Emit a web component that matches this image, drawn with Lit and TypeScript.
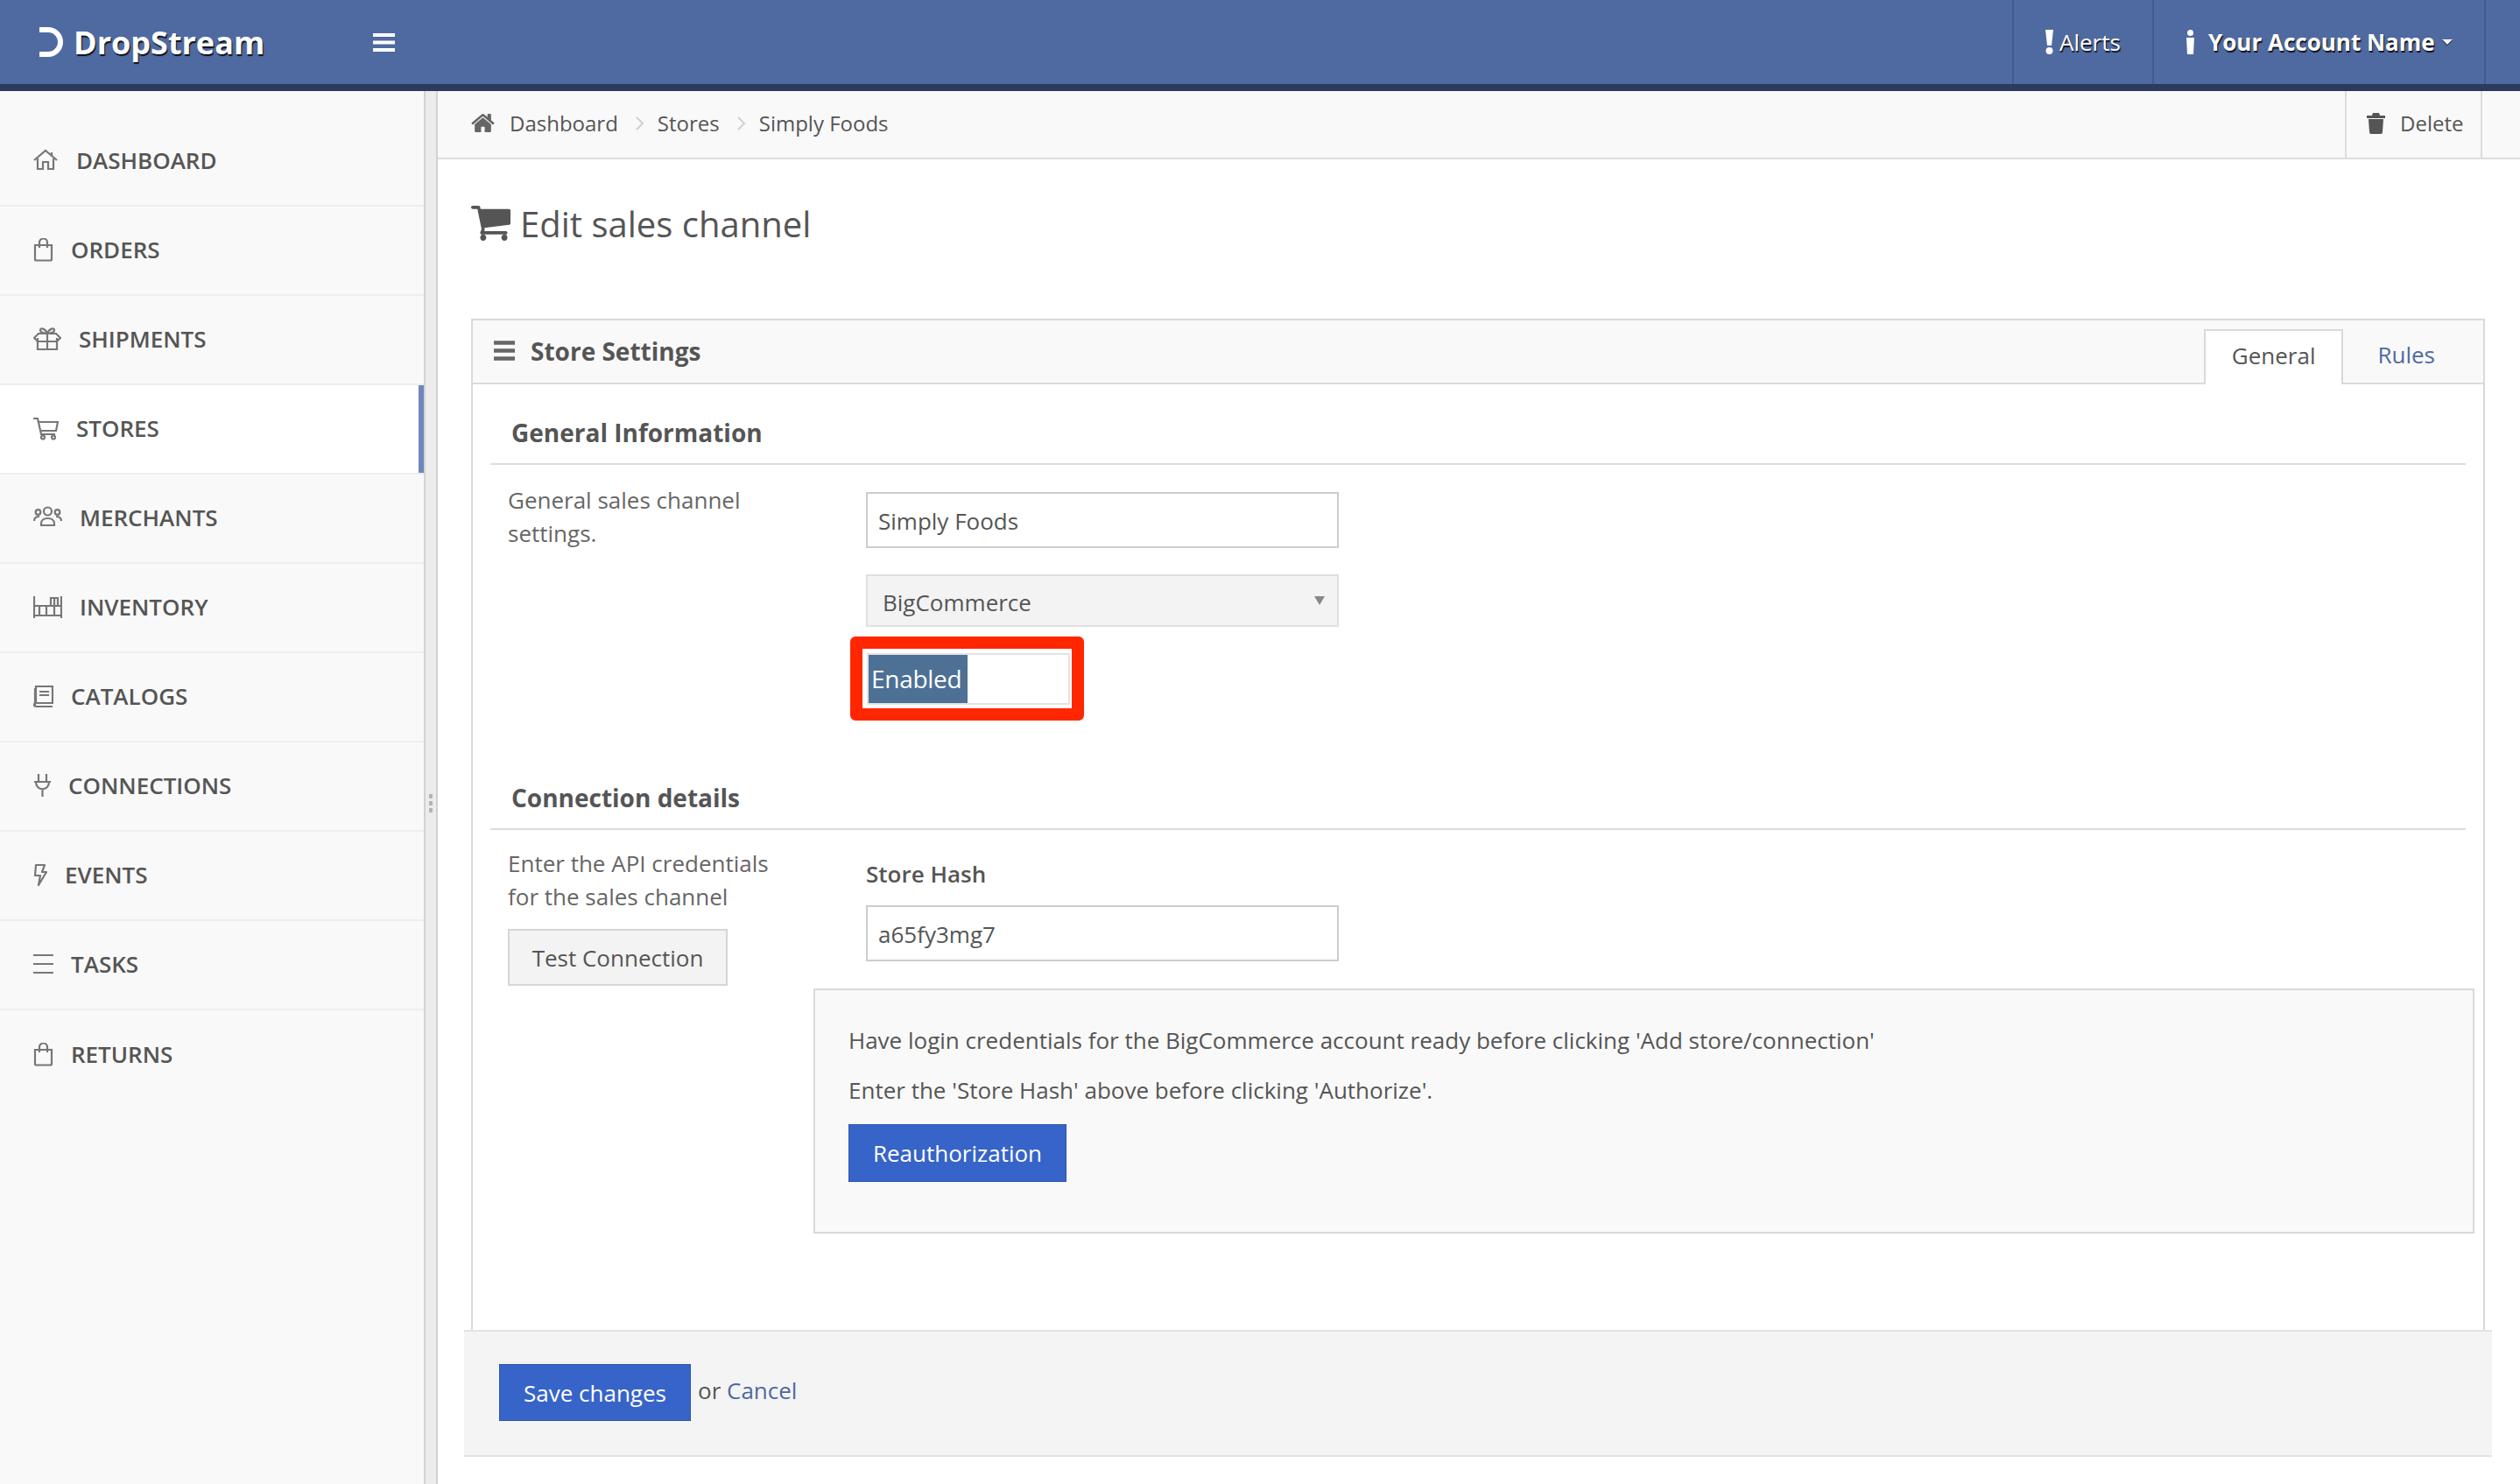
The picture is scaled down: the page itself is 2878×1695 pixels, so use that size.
import { LitElement, css, html, svg } from 'lit';
import { customElement } from 'lit/decorators.js';

const bag = svg`<path d="M2 8h19v16a1.500 1.500 0 0 1-1.500 1.500h-16a1.500 1.500 0 0 1-1.500-1.500z"/><path d="M7 11V5a4.500 4.500 0 0 1 9 0v6"/>`;

const navItems = [
  { label: 'Dashboard', w: 29, icon: svg`<path d="M1 13L14 2l13 11"/><path d="M5 11v12h6v-8h6v8h6V11"/><path d="M21 4v4"/>` },
  { label: 'Orders', w: 23, icon: bag },
  { label: 'Shipments', w: 32, icon: svg`<path d="M5 12v13h22V12"/><path d="M1 12l5-5h20l5 5-4 4H5z"/><path d="M16 7v18"/><path d="M16 7c-3 0-8-1-8-4s6-2 8 4c2-6 8-7 8-4s-5 4-8 4z"/>` },
  { label: 'Stores', w: 29, active: true, icon: svg`<path d="M0 2h5l4 18h16"/><path d="M6 6h22l-2 10H8"/><circle cx="11" cy="23.500" r="2"/><circle cx="23" cy="23.500" r="2"/>` },
  { label: 'Merchants', w: 33, icon: svg`<circle cx="16.500" cy="6" r="4.500"/><circle cx="5.500" cy="7" r="2.800"/><circle cx="27.500" cy="7" r="2.800"/><path d="M9 20c0-8 15-8 15 0v2H9z"/><path d="M1 17c0-4 3-5 6-5"/><path d="M32 17c0-4-3-5-6-5"/>` },
  { label: 'Inventory', w: 33, icon: svg`<path d="M1 1v25M32 1v25M1 23h31M1 12h31"/><path d="M7 12v11h17V12M15 12v11"/><path d="M20 12V3h8v9M24 3v9"/>` },
  { label: 'Catalogs', w: 23, icon: svg`<path d="M3 21V2h19v19H3a2 2 0 0 0 0 4h19"/><path d="M2 24V4"/><path d="M7 8h11M7 12h11"/>` },
  { label: 'Connections', w: 20, icon: svg`<path d="M6 0v8M15 0v8M1 9h19M3 9c0 11 15 11 15 0M10.500 17v9"/>` },
  { label: 'Events', w: 16, icon: svg`<path d="M3 2h10l-3 8h5L6 25l2-11H2z" stroke-linejoin="round"/>` },
  { label: 'Tasks', w: 23, icon: svg`<path d="M0 3h23M0 13h23M0 23h23"/>` },
  { label: 'Returns', w: 23, icon: bag },
];

const cartPath = 'M640 1536q0 52-38 90t-90 38-90-38-38-90 38-90 90-38 90 38 38 90zm896 0q0 52-38 90t-90 38-90-38-38-90 38-90 90-38 90 38 38 90zm128-1088v512q0 24-16.500 42.500t-40.500 21.500l-1044 122q13 60 13 70 0 16-24 64h920q26 0 45 19t19 45-19 45-45 19h-1024q-26 0-45-19t-19-45q0-11 8-31.500t16-36 21.500-40 15.500-29.500l-177-823h-204q-26 0-45-19t-19-45 19-45 45-19h256q16 0 28.500 6.500t19.500 15.500 13 24.500 8 26 5.500 29.500 4.500 26h1201q26 0 45 19t19 45z';
const homePath = 'M1408 992v480q0 26-19 45t-45 19h-384v-384h-256v384h-384q-26 0-45-19t-19-45v-480q0-1 .5-3t.5-3l575-474 575 474q1 2 1 6zm223-69l-62 74q-8 9-21 11h-3q-13 0-21-7l-692-577-692 577q-12 8-24 7-13-2-21-11l-62-74q-8-10-7-23.500t11-21.500l719-599q32-26 76-26t76 26l244 204v-195q0-14 9-23t23-9h192q14 0 23 9t9 23v408l219 182q10 8 11 21.500t-7 23.500z';

@customElement('app-root')
export class AppRoot extends LitElement {
  static styles = css`
    :host {
      display: block;
      min-height: 1695px;
      font-family: 'Open Sans', sans-serif;
      font-size: 26px;
      color: #555;
      background: #fff;
    }
    * { box-sizing: border-box; }
    a { color: #4f6aa0; text-decoration: none; }

    .topbar {
      display: flex;
      align-items: stretch;
      height: 104px;
      background: #4f6aa0;
      border-bottom: 8px solid #2c3a5c;
      color: #fff;
      text-shadow: 1px 2px 1px rgba(0, 0, 0, .85);
    }
    .brand {
      display: flex;
      align-items: center;
      width: 426px;
      padding-left: 44px;
      gap: 10px;
      font-size: 36px;
      font-weight: 700;
    }
    .brand svg { filter: blur(.6px); }
    .burger { align-self: center; width: 25px; height: 21px; }
    .topnav { display: flex; margin-left: auto; margin-right: 39px; border-right: 2px solid #435a8c; }
    .topnav .cell {
      display: flex;
      align-items: center;
      border-left: 2px solid #435a8c;
    }
    .alerts { width: 160px; padding-left: 36px; gap: 7px; }
    .account { width: 379px; padding-left: 36px; gap: 15px; font-weight: 700; }
    .caret { width: 12px; height: 6px; margin-left: -7px; filter: drop-shadow(0 1px 0 #000); }

    .layout { display: flex; min-height: 1591px; }
    .sidebar {
      width: 484px;
      flex: none;
      padding-top: 30px;
      background: #f9f9f9;
    }
    .nav-item {
      display: flex;
      align-items: center;
      gap: 20px;
      height: 102px;
      padding: 0 0 2px 38px;
      border-bottom: 2px solid #eeeeee;
      font-weight: 600;
      text-transform: uppercase;
    }
    .nav-item:last-child { border-bottom: none; }
    .nav-item.active { background: #fff; box-shadow: inset -6px 0 0 #6f87bd; }
    .nav-item svg { flex: none; height: 27px; fill: none; stroke: #777; stroke-width: 2.200; }

    .splitter {
      display: flex;
      flex-direction: column;
      align-items: center;
      gap: 3px;
      width: 16px;
      flex: none;
      padding-top: 803px;
      background: #ececec;
      border: solid #d2d2d2;
      border-width: 0 2px;
    }
    .splitter i { width: 4px; height: 5px; background: #b4b4b4; }

    .main { flex: 1; min-width: 0; }
    .crumbs {
      display: flex;
      align-items: center;
      height: 78px;
      padding: 0 0 3px 38px;
      font-size: 24px;
      background: #f9f9f9;
      border-bottom: 2px solid #dcdcdc;
    }
    .crumbs .home { width: 27px; height: 21px; fill: #666; margin-right: 17px; }
    .crumbs .sep { width: 10px; height: 16px; margin: 0 15px 0 20px; fill: none; stroke: #d0d0d0; stroke-width: 2; }
    .delete {
      display: flex;
      align-items: center;
      gap: 17px;
      align-self: stretch;
      width: 157px;
      margin: 0 43px -3px auto;
      padding: 0 0 3px 23px;
      border: solid #dcdcdc;
      border-width: 0 2px;
    }
    .delete svg { width: 21px; height: 24px; fill: #555; }

    .content { padding: 0 40px 31px 38px; }
    h1 {
      display: flex;
      align-items: center;
      gap: 11px;
      height: 50px;
      margin: 48px 0 84px;
      font-size: 40px;
      font-weight: 400;
    }
    h1 svg { width: 45px; height: 40px; fill: #555; }

    .panel { border: solid #d9d9d9; border-width: 2px 2px 0; }
    .panel-head {
      display: flex;
      height: 73px;
      background: #f9f9f9;
      border-bottom: 2px solid #d9d9d9;
    }
    .panel-title {
      display: flex;
      align-items: center;
      gap: 18px;
      padding: 0 0 2px 24px;
      font-weight: 700;
      font-size: 28px;
    }
    .panel-title svg { width: 24px; height: 23px; stroke: #666; stroke-width: 4.500; fill: none; }
    .tabs { display: flex; margin-left: auto; margin-bottom: -2px; padding-top: 10px; margin-right: 23px; }
    .tab { display: flex; align-items: center; height: 63px; padding: 0 32px 5px; }
    .tab.current {
      background: #fff;
      border: solid #d9d9d9;
      border-width: 2px 2px 0;
      padding: 0 30px 5px;
      margin-right: 7px;
    }

    .panel-body { padding: 0 20px 110px; }
    h2 {
      height: 92px;
      margin: 0;
      padding: 36px 0 0 24px;
      font-size: 28px;
      line-height: 38px;
      font-weight: 700;
      border-bottom: 2px solid #dcdcdc;
    }
    .row { display: grid; grid-template-columns: 429px 540px; }
    .row p { margin: 0; padding: 21px 20px 0; line-height: 38px; color: #666; width: 320px; box-sizing: content-box; }
    .stack { padding-top: 31px; }
    input {
      display: block;
      width: 540px;
      height: 64px;
      padding: 2px 12px 0;
      font: inherit;
      color: #555;
      border: 2px solid #cdcdcd;
      border-radius: 0;
      background: #fff;
    }
    .select {
      display: flex;
      align-items: center;
      justify-content: space-between;
      height: 60px;
      margin-top: 30px;
      padding: 3px 14px 0 17px;
      background: #f3f3f3;
      border: 2px solid #e0e0e0;
    }
    .select svg { width: 12px; height: 10px; fill: #888; margin-top: -3px; }
    .mark {
      width: 267px;
      height: 96px;
      margin: 11px 0 0 -18px;
      padding: 5px 3px 4px 5px;
      border: 14px solid #ff2600;
      border-radius: 6px;
    }
    .toggle { height: 59px; border: 2px solid #e3e3e3; width: 232px; }
    .toggle span {
      display: block;
      width: 113px;
      height: 100%;
      padding-left: 3px;
      line-height: 55px;
      font-size: 28px;
      letter-spacing: -.3px;
      color: #fff;
      background: #4d7095;
      white-space: nowrap;
    }
    .general { height: 325px; }
    .btn {
      display: inline-flex;
      align-items: center;
      justify-content: center;
      font: inherit;
      border-radius: 0;
    }
    .btn.light {
      width: 251px;
      height: 65px;
      margin: 18px 0 0 20px;
      background: #f3f3f3;
      border: 2px solid #d6d6d6;
      color: #555;
    }
    .btn.primary { background: #3764c8; border: 1px solid #2f56ad; color: #fff; }
    label { display: block; margin: 31px 0 17px; line-height: 38px; font-weight: 600; }
    .left p { padding-top: 19px; }
    .hash { height: 181px; }
    .info {
      height: 280px;
      margin: 0 0 0 369px;
      width: 1897px;
      padding: 39px 38px 0;
      background: #f9f9f9;
      border: 2px solid #d9d9d9;
    }
    .info p { margin: 0 0 21px; line-height: 36px; }
    .info .btn { width: 249px; height: 66px; }

    .footer {
      display: flex;
      align-items: center;
      gap: 8px;
      height: 145px;
      margin: 0 -8px;
      padding: 0 0 2px 40px;
      background: #f4f4f4;
      border: solid #e3e3e3;
      border-width: 2px 0;
    }
    .footer .btn { width: 219px; height: 65px; }
    .footer span { margin-top: -6px; }
  `;

  render() {
    return html`
      <header class="topbar">
        <div class="brand">
          <svg width="30" height="36" viewBox="0 0 30 36" fill="none" stroke="#fff" stroke-width="6"><path d="M1 4h10a14 14 0 0 1 0 28H1"/></svg>
          DropStream
        </div>
        <svg class="burger" viewBox="0 0 25 21" fill="#fff"><path d="M0 0h25v4H0zM0 8.500h25v4H0zM0 17h25v4H0z"/></svg>
        <div class="topnav">
          <div class="cell alerts">
            <svg width="9" height="28" viewBox="0 0 9 28" fill="#fff"><path d="M0 0h9L7 18H2z"/><circle cx="4.500" cy="24" r="4"/></svg>
            Alerts
          </div>
          <div class="cell account">
            <svg width="11" height="28" viewBox="0 0 11 28" fill="#fff"><circle cx="5.500" cy="3.500" r="3.500"/><path d="M1 9h9l-1 19H2z"/></svg>
            Your Account Name
            <svg class="caret" viewBox="0 0 12 6" fill="#fff"><path d="M0 0h12L6 6z"/></svg>
          </div>
        </div>
      </header>
      <div class="layout">
        <nav class="sidebar">
          ${navItems.map((item) => html`
            <div class="nav-item ${item.active ? 'active' : ''}">
              <svg viewBox="0 0 ${item.w} 27" style="width: ${item.w}px">${item.icon}</svg>
              ${item.label}
            </div>
          `)}
        </nav>
        <div class="splitter"><i></i><i></i><i></i></div>
        <main class="main">
          <div class="crumbs">
            <svg class="home" viewBox="0 256 1664 1280"><path d=${homePath}/></svg>
            Dashboard
            <svg class="sep" viewBox="0 0 10 16"><path d="M1 1l7 7-7 7"/></svg>
            Stores
            <svg class="sep" viewBox="0 0 10 16"><path d="M1 1l7 7-7 7"/></svg>
            Simply Foods
            <div class="delete">
              <svg viewBox="0 0 21 24"><path d="M7 0h7l1 3h6v3H0V3h6zM2 7h17l-1 15a2 2 0 0 1-2 2H5a2 2 0 0 1-2-2z"/></svg>
              Delete
            </div>
          </div>
          <div class="content">
            <h1>
              <svg viewBox="0 256 1664 1408" preserveAspectRatio="none"><path d=${cartPath}/></svg>
              Edit sales channel
            </h1>
            <section class="panel">
              <div class="panel-head">
                <div class="panel-title">
                  <svg viewBox="0 0 24 23"><path d="M0 2.500h24M0 11.500h24M0 20.500h24"/></svg>
                  Store Settings
                </div>
                <div class="tabs">
                  <div class="tab current">General</div>
                  <a class="tab">Rules</a>
                </div>
              </div>
              <div class="panel-body">
                <h2>General Information</h2>
                <div class="row general">
                  <p>General sales channel settings.</p>
                  <div class="stack">
                    <input value="Simply Foods" />
                    <div class="select">
                      BigCommerce
                      <svg viewBox="0 0 12 10"><path d="M0 0h12L6 10z"/></svg>
                    </div>
                    <div class="mark"><div class="toggle"><span>Enabled</span></div></div>
                  </div>
                </div>
                <h2 class="second">Connection details</h2>
                <div class="row hash">
                  <div class="left">
                    <p>Enter the API credentials for the sales channel</p>
                    <button class="btn light">Test Connection</button>
                  </div>
                  <div>
                    <label>Store Hash</label>
                    <input value="a65fy3mg7" />
                  </div>
                </div>
                <div class="info">
                  <p>Have login credentials for the BigCommerce account ready before clicking 'Add store/connection'</p>
                  <p>Enter the 'Store Hash' above before clicking 'Authorize'.</p>
                  <button class="btn primary">Reauthorization</button>
                </div>
              </div>
            </section>
            <div class="footer">
              <button class="btn primary">Save changes</button>
              <span>or <a>Cancel</a></span>
            </div>
          </div>
        </main>
      </div>
    `;
  }
}
